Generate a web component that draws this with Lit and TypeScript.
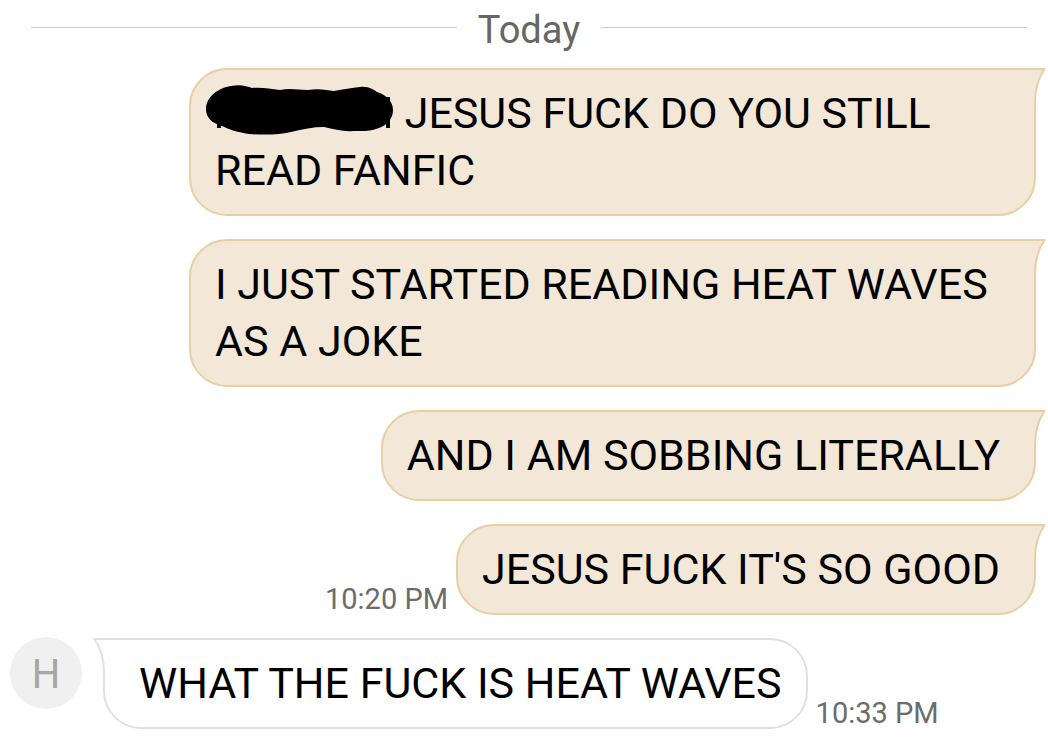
import { LitElement, html, css, svg } from "lit";
import { customElement, property } from "lit/decorators.js";

@customElement("chat-bubble")
class ChatBubble extends LitElement {
  @property({ type: Boolean, reflect: true }) incoming = false;

  static styles = css`
    :host {
      --fill: #f3e8d7;
      --line: #e8cfa2;
      position: relative;
      display: block;
      box-sizing: border-box;
      min-width: 0;
      max-width: 847px;
      padding: 15px 34px 15px 24px;
      border: 2px solid var(--line);
      border-radius: 38px 0 38px 38px;
      background: var(--fill);
      color: #000;
      font-size: 43px;
      line-height: 57px;
    }
    :host([incoming]) {
      --fill: #fff;
      --line: #e0e0e0;
      padding: 15px 24px 15px 34px;
      border-radius: 0 38px 38px 38px;
    }
    .tail {
      position: absolute;
      top: -2px;
      right: -12px;
      width: 14px;
      height: 34px;
      display: block;
    }
    :host([incoming]) .tail {
      right: auto;
      left: -12px;
      transform: scaleX(-1);
    }
    .tail-fill { fill: var(--fill); }
    .tail-line { fill: none; stroke: var(--line); stroke-width: 2; stroke-linejoin: round; }
  `;

  render() {
    return html`<slot></slot>
      <svg class="tail" viewBox="0 0 14 34" aria-hidden="true">
        <path class="tail-fill" d="M0 1H12.6Q3 15 3 34H0Z" />
        <path class="tail-line" d="M0 1H12.6Q3 15 3 34" />
      </svg>`;
  }
}

@customElement("app-root")
class AppRoot extends LitElement {
  static styles = css`
    :host {
      display: block;
      min-height: 100vh;
      box-sizing: border-box;
      padding: 9px 12px 19px 10px;
      background: #fff;
      font-family: Roboto, "Liberation Sans", sans-serif;
    }
    .day {
      display: flex;
      align-items: center;
      gap: 21px;
      margin: 0 9px 17px 21px;
      color: #666;
      font-size: 38px;
      line-height: 42px;
      font-weight: 400;
    }
    .day::before, .day::after {
      content: "";
      flex: 1;
      height: 1px;
      background: #c8c8c8;
      position: relative;
      top: -3px;
    }
    .thread { display: flex; flex-direction: column; gap: 23px; margin: 0; padding: 0; list-style: none; }
    .row { display: flex; align-items: flex-end; justify-content: flex-end; gap: 8px; }
    .row.in { justify-content: flex-start; }
    .time { color: #6c6c6c; font-size: 29px; line-height: 32px; white-space: nowrap; }
    .avatar {
      flex: none;
      align-self: flex-start;
      box-sizing: border-box;
      width: 72px;
      height: 72px;
      margin: -1px 13px 0 0;
      padding-top: 2px;
      border-radius: 50%;
      background: #f0f0f0;
      color: #a6a6a6;
      font-size: 40px;
      line-height: 72px;
      text-align: center;
    }
    .scribble { width: 188px; height: 50px; margin: 0 0 -7px -9px; overflow: visible; }
  `;

  private scribble = svg`<svg class="scribble" viewBox="0 0 188 50" role="img" aria-label="Name crossed out">
    <path d="M0 24C0 12 12 3 25 1C34 -1 41 1 46 3C56 2 64 4 74 5C84 3 92 5 102 5C112 3 121 5 128 6C137 4 146 3 154 2C163 1 168 5 171 7C181 10 187 17 187 25C187 34 181 40 173 43C164 47 154 46 147 46C138 47 128 44 118 42C107 42 97 44 85 47C72 50 58 50 43 49C30 47 22 44 16 41C6 38 0 33 0 24ZM11 35H15V43H11ZM180 12H184V43H180Z" />
  </svg>`;

  render() {
    return html`
      <header class="day">Today</header>
      <ol class="thread">
        <li class="row"><chat-bubble>${this.scribble} JESUS FUCK DO YOU STILL READ FANFIC</chat-bubble></li>
        <li class="row"><chat-bubble>I JUST STARTED READING HEAT WAVES AS A JOKE</chat-bubble></li>
        <li class="row"><chat-bubble>AND I AM SOBBING LITERALLY</chat-bubble></li>
        <li class="row"><time class="time">10:20 PM</time><chat-bubble>JESUS FUCK IT'S SO GOOD</chat-bubble></li>
        <li class="row in"><span class="avatar">H</span><chat-bubble incoming>WHAT THE FUCK IS HEAT WAVES</chat-bubble><time class="time">10:33 PM</time></li>
      </ol>`;
  }
}
